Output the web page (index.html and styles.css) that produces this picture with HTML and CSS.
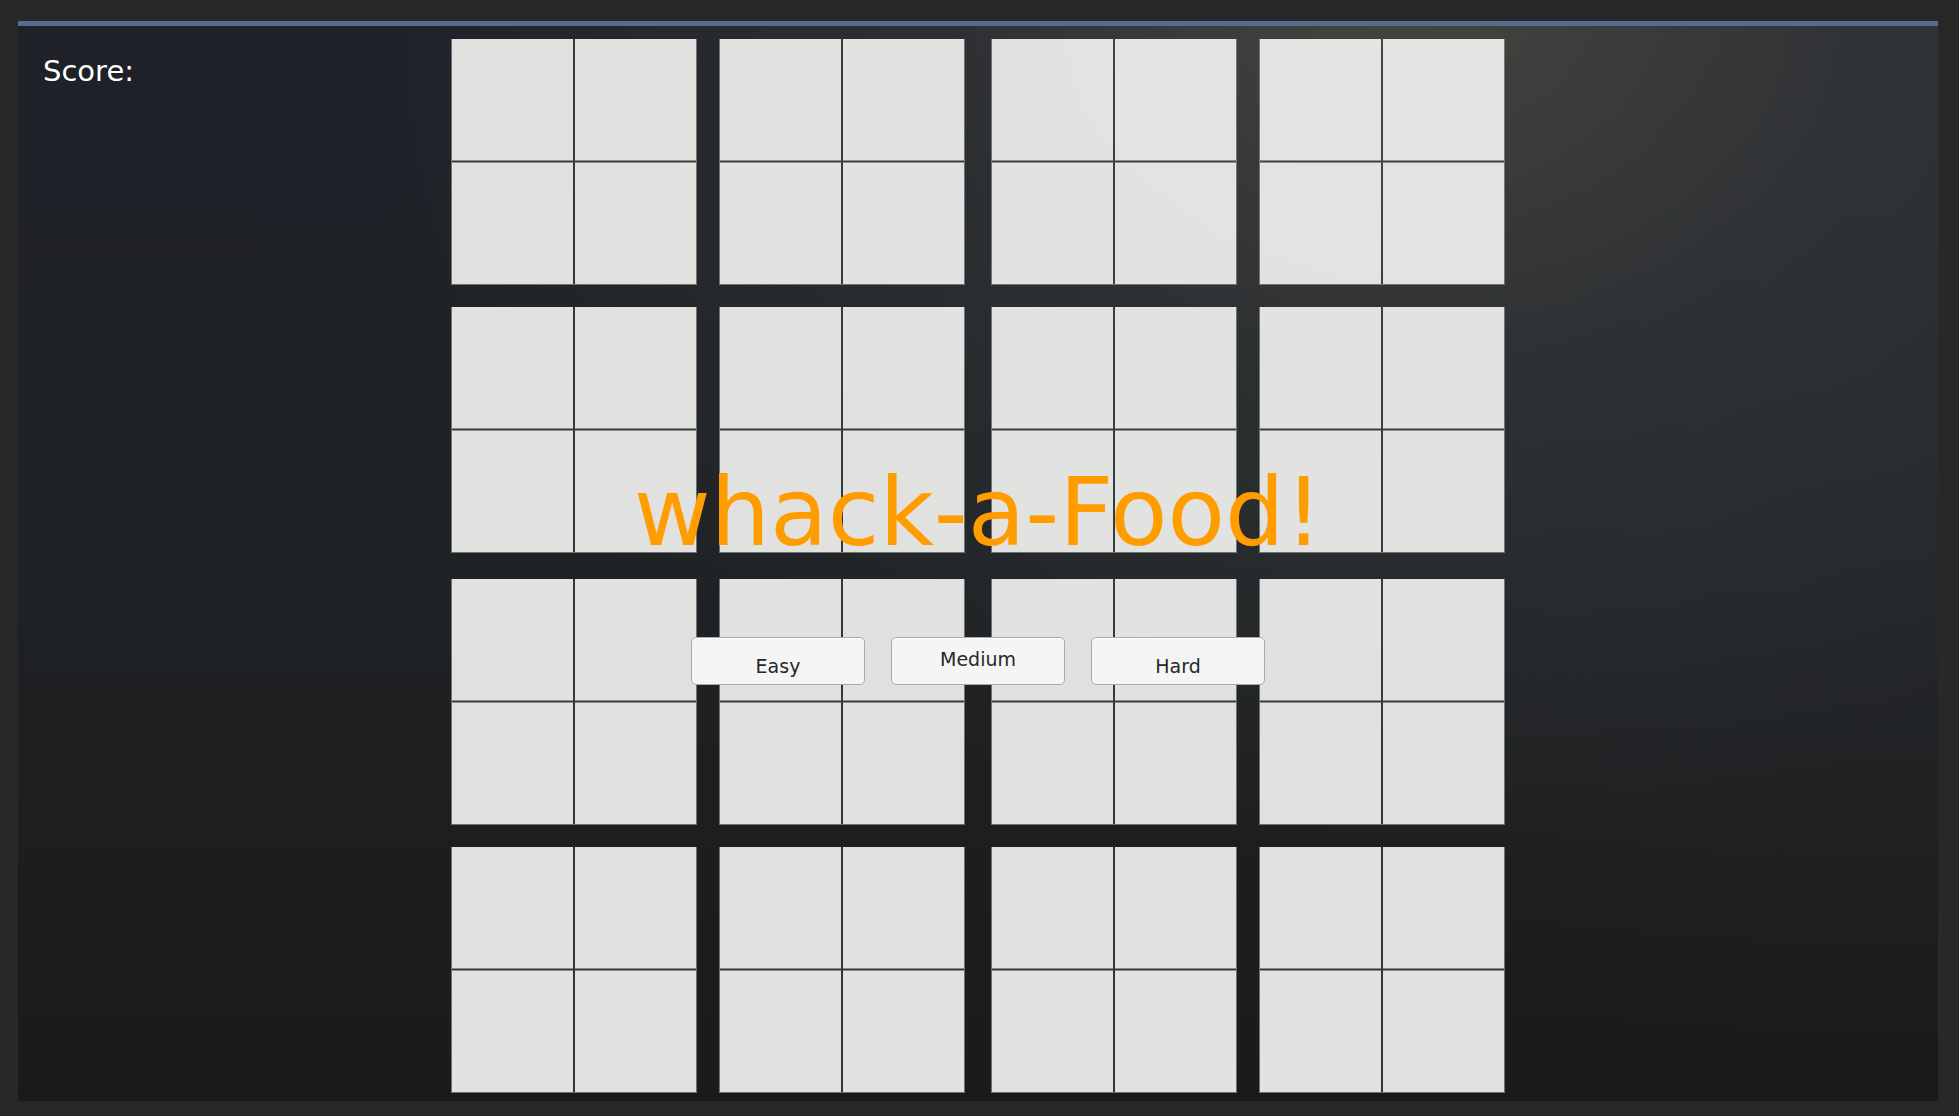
FILE: index.html
```html
<!DOCTYPE html>
<html lang="en">
<head>
    <meta charset="UTF-8">
    <meta name="viewport" content="width=device-width, initial-scale=1.0">
    <title>Whack-a-Food!</title>
    <link rel="stylesheet" href="styles.css">
</head>
<body>

<main class="game">
    <div class="board" id="board"></div>

    <div class="score">Score:</div>

    <div class="menu">
        <h1 class="title">whack-a-Food!</h1>
        <div class="levels">
            <button type="button" class="level low">Easy</button>
            <button type="button" class="level">Medium</button>
            <button type="button" class="level low">Hard</button>
        </div>
    </div>
</main>

<script src="script.js"></script>
</body>
</html>
```

FILE: styles.css
```css
* {
    box-sizing: border-box;
}
body {
    margin: 0;
    padding: 21px 21px 15px 18px;
    min-height: 100vh;
    display: flex;
    background-color: #282828;
    font-family: "DejaVu Sans", sans-serif;
}
.game {
    position: relative;
    flex: 1;
    border-top: 5px solid #556b90;
    padding: 13px 20px 8px;
    background:
        radial-gradient(ellipse 55% 80% at 72% -4%, rgba(76, 74, 67, 0.85), rgba(54, 57, 58, 0.55) 45%, rgba(40, 44, 48, 0)),
        radial-gradient(ellipse 55% 85% at 96% 10%, rgba(48, 51, 56, 0.55), rgba(38, 42, 46, 0)),
        linear-gradient(#1f2129, #1f2225 50%, #1a1a19);
}

/* board: 4 blocks of 4 holes, each hole made of 4 cells */
.board {
    width: 1054px;
    max-width: 100%;
    margin: 0 auto;
    display: grid;
    grid-template-columns: 1fr 1fr;
    gap: 26px;
}
.block {
    display: grid;
    grid-template-columns: 1fr 1fr;
    gap: 22px;
}
.hole {
    display: grid;
    grid-template-columns: 1fr 1fr;
    gap: 1px 2px;
    aspect-ratio: 1;
    border: 1px solid rgba(150, 155, 152, 0.6);
    border-top: none;
    background-color: rgba(70, 78, 76, 0.5);
}
/* slightly see-through, so the light behind the board tints it */
.cell {
    background-color: rgba(255, 255, 253, 0.855);
}
.cell:nth-child(-n+2) {
    border-bottom: 1px solid #8a908d;
}
.cell:nth-child(n+3) {
    border-top: 1px solid #8a908d;
}

.score {
    position: absolute;
    top: 27px;
    left: 25px;
    font-size: 29px;
    line-height: 36px;
    color: white;
}

.menu {
    position: absolute;
    inset: 0;
    padding-top: 20px;
    display: flex;
    flex-direction: column;
    align-items: center;
    justify-content: center;
    gap: 74px;
}
.title {
    margin: 0;
    font-size: 94px;
    line-height: 100px;
    font-weight: normal;
    color: #ff9c00;
}
.levels {
    display: flex;
    gap: 26px;
}
.level {
    width: 174px;
    height: 48px;
    padding: 0 0 4px;
    border: 1px solid #aaa;
    border-radius: 5px;
    background-color: #f5f5f5;
    box-shadow: inset 0 1px white;
    color: #282828;
    font-family: inherit;
    font-size: 19px;
    line-height: 24px;
    cursor: pointer;
}
.level:hover {
    background-color: white;
}
.low {
    padding: 10px 0 0;
}
```

FILE: script.js
```js
// Build the board
const board = document.getElementById("board");

function addDivs(parent, className, count) {
    const added = [];
    for (let i = 0; i < count; i++) {
        const div = document.createElement("div");
        div.className = className;
        parent.appendChild(div);
        added.push(div);
    }
    return added;
}

addDivs(board, "block", 4).forEach(block => {
    addDivs(block, "hole", 4).forEach(hole => addDivs(hole, "cell", 4));
});
```
